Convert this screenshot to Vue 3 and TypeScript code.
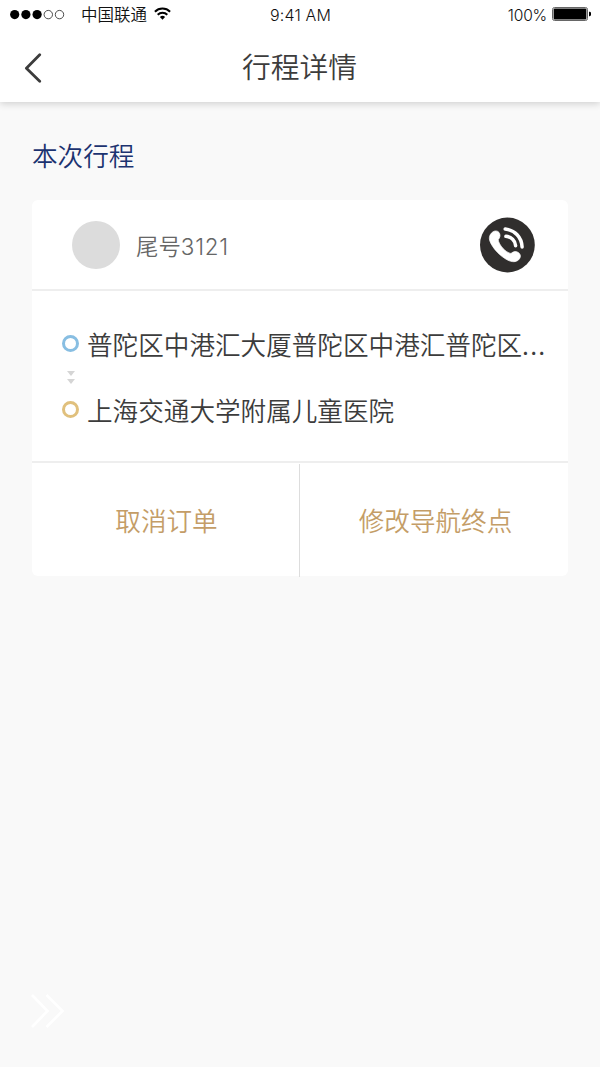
<script setup lang="ts">
const signal: boolean[] = [true, true, true, false, false]
const phoneTail = '3121'
const origin = '普陀区中港汇大厦普陀区中港汇普陀区'
const destination = '上海交通大学附属儿童医院'
</script>

<template>
  <div class="screen">
    <header class="top">
      <div class="status">
        <div class="carrier">
          <svg class="dots" width="55" height="12" viewBox="0 0 55 12">
            <circle
              v-for="(on, i) in signal"
              :key="i"
              :cx="4.7 + i * 11.2"
              cy="5.6"
              :r="on ? 4.6 : 4.2"
              :fill="on ? '#000' : 'none'"
              :stroke="on ? 'none' : '#222'"
              stroke-width="0.8"
            />
          </svg>
          <span class="carrier-name">中国联通</span>
          <svg class="wifi" width="17" height="13" viewBox="0 0 17 13" fill="none" stroke="#000" stroke-width="2">
            <path d="M0.9 4.7A10.8 10.8 0 0 1 16.1 4.7" />
            <path d="M3.7 7.8A6.8 6.8 0 0 1 13.3 7.8" />
            <path d="M8.5 12.8L5.9 10.1A3.7 3.7 0 0 1 11.1 10.1Z" fill="#000" stroke="none" />
          </svg>
        </div>
        <span class="time">9:41 AM</span>
        <div class="power">
          <span class="percent">100%</span>
          <svg class="battery" width="40" height="14" viewBox="0 0 40 14">
            <rect x="0.5" y="0.5" width="35" height="13" rx="2" fill="#fff" stroke="#666" />
            <rect x="1.6" y="1.6" width="32.8" height="10.8" rx="1" fill="#000" />
            <path d="M37 4.8h0.6a1.4 1.4 0 0 1 1.4 1.4v1.6a1.4 1.4 0 0 1-1.4 1.4H37z" fill="#000" />
          </svg>
        </div>
      </div>
      <nav class="nav">
        <svg class="back" width="18" height="30" viewBox="0 0 18 30" fill="none" stroke="#3c3c3c" stroke-width="2.8" stroke-linecap="round" stroke-linejoin="round">
          <path d="M15.7 1.8L2.4 15.2L15.7 28.2" />
        </svg>
        <h1 class="title">行程详情</h1>
      </nav>
    </header>

    <main class="body">
      <h2 class="section">本次行程</h2>
      <section class="card">
        <div class="person">
          <span class="avatar"></span>
          <span class="tail">尾号<span class="digits">{{ phoneTail }}</span></span>
          <svg class="call" width="56" height="56" viewBox="0 0 56 56">
            <circle cx="28.4" cy="28" r="27.4" fill="#302e2d" />
            <path
              d="M13.3 15.3C15.7 13.2 19.2 13.5 20.5 16.3C21.5 18.5 21 20.7 19.2 22.7C19.9 28 26.5 35.5 32 36.5C34.6 34.2 37 34 39.2 35.4C42 37.3 42.1 40.5 39.5 42.9C36.8 45.3 32.8 45.2 28.5 43C21.3 39.3 13.8 31.5 11 24.4C9.6 20.7 10.6 17.6 13.3 15.3Z"
              fill="#fff"
              stroke="#fff"
              stroke-width="0.7"
            />
            <g fill="none" stroke="#fff" stroke-width="3.5" stroke-linecap="round">
              <path d="M26.2 12C36 13.2 42.6 20 43.1 30" />
              <path d="M26.9 19.3C32.3 19.8 36.3 23.6 36.6 28.7" />
            </g>
          </svg>
        </div>
        <div class="route">
          <div class="stop"><i class="ring blue"></i><span>{{ origin }}<span class="more">...</span></span></div>
          <svg class="arrows" width="8" height="13" viewBox="0 0 8 13" fill="#d5d5d5">
            <path d="M0 0h8L4 5z" />
            <path d="M0 8h8L4 13z" />
          </svg>
          <div class="stop"><i class="ring gold"></i><span>{{ destination }}</span></div>
        </div>
        <div class="actions">
          <button type="button" class="action">取消订单</button>
          <span class="divider"></span>
          <button type="button" class="action">修改导航终点</button>
        </div>
      </section>
    </main>

    <footer class="foot">
      <svg width="36" height="36" viewBox="0 0 36 36" fill="none" stroke="#fff" stroke-width="2.6">
        <path d="M2 2L17.5 18L2 34" />
        <path d="M16.5 2L32.5 18L16.5 34" />
      </svg>
    </footer>
  </div>
</template>

<style>
body {
  margin: 0;
}
</style>

<style scoped>
.screen {
  display: flex;
  flex-direction: column;
  width: 600px;
  height: 1067px;
  overflow: hidden;
  background: #f9f9f9;
  color: #3c3c3c;
  font-family: "Noto Sans CJK SC", sans-serif;
  font-weight: 350;
}
.top {
  height: 102px;
  background: #fff;
  box-shadow: 0 2px 7px rgba(0, 0, 0, 0.16);
}
.status {
  display: grid;
  grid-template-columns: 1fr auto 1fr;
  align-items: center;
  height: 29px;
  padding: 0 8px 0 10px;
  color: #111;
}
.carrier,
.power {
  display: flex;
  align-items: center;
}
.carrier-name {
  margin: -2px 7px 0 16px;
  font-size: 16.5px;
  line-height: 24px;
}
.wifi {
  margin-top: -3px;
}
.time,
.percent {
  font-family: Inter, "Liberation Sans", sans-serif;
  font-size: 16px;
  line-height: 20px;
  margin-top: 1px;
}
.time {
  margin-right: 1px;
  letter-spacing: 0.15px;
}
.percent {
  margin-top: 2px;
  font-size: 15.6px;
  letter-spacing: -0.2px;
}
.battery {
  margin-top: -1px;
}
.power {
  justify-content: flex-end;
  gap: 5px;
}
.nav {
  display: grid;
  grid-template-columns: 60px 1fr 60px;
  align-items: center;
  height: 73px;
}
.back {
  margin: 5px 0 0 24px;
}
.title {
  margin: 0 1px 0 0;
  font-size: 28.8px;
  line-height: 40px;
  font-weight: inherit;
  text-align: center;
}
.body {
  flex: 1;
  padding: 0 32px;
}
.section {
  margin: 34px 0 26px;
  font-size: 25.6px;
  line-height: 38px;
  font-weight: inherit;
  color: #1c3370;
}
.card {
  height: 376px;
  border-radius: 6px;
  background: #fff;
}
.person {
  display: flex;
  align-items: center;
  box-sizing: border-box;
  height: 91px;
  padding: 0 33px 0 40px;
  border-bottom: 2px solid #eee;
}
.avatar {
  width: 48px;
  height: 48px;
  border-radius: 50%;
  background: #dcdcdc;
}
.tail {
  flex: 1;
  margin: 2px 0 0 16px;
  font-size: 22.4px;
  line-height: 32px;
  color: #666;
}
.digits {
  font-family: Inter, "Liberation Sans", sans-serif;
  letter-spacing: 0.8px;
}
.route {
  display: flex;
  flex-direction: column;
  box-sizing: border-box;
  height: 172px;
  padding: 34px 0 0 30px;
  border-bottom: 2px solid #eee;
}
.stop {
  display: flex;
  align-items: center;
  gap: 8px;
  font-size: 25.6px;
  line-height: 38px;
  white-space: nowrap;
}
.ring {
  box-sizing: border-box;
  width: 17px;
  height: 17px;
  margin-top: -1px;
  border: 3px solid #88bee2;
  border-radius: 50%;
}
.gold {
  border-color: #e0c07d;
}
.more {
  letter-spacing: 1.2px;
}
.arrows {
  margin: 8px 0 7px 5px;
}
.actions {
  display: flex;
  height: 113px;
}
.action {
  flex: 1 1 0;
  padding: 0 0 0 2px;
  border: 0;
  background: none;
  color: #c49d67;
  font: 350 25.6px/38px "Noto Sans CJK SC", sans-serif;
}
.divider {
  width: 1px;
  height: 113px;
  margin: 1px 1px 0 0;
  background: #ddd;
}
.foot {
  height: 74px;
  padding-left: 30px;
}
</style>
